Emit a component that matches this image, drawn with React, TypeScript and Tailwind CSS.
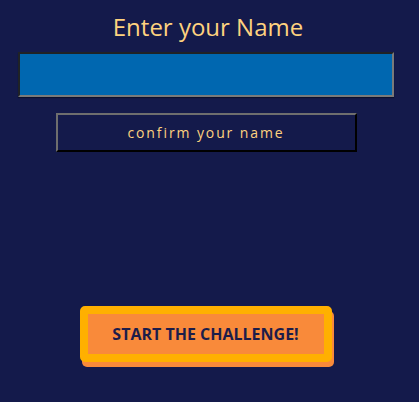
import { useState } from 'react';

export default function App() {
  const [name, setName] = useState('');

  return (
    <div className="min-h-[402px] w-full bg-[#141a4b] font-['Open_Sans',sans-serif] flex flex-col items-center pt-[11px]">
      <h1 className="text-[24px] leading-[32px] text-[#fed27f] ml-[-3px]">Enter your Name</h1>
      <input
        value={name}
        onChange={(e) => setName(e.target.value)}
        className="mt-[9px] ml-[-8px] w-[376px] h-[45px] bg-[#0067b0] border-2 border-t-[#1f2226] border-l-[#1f2226] border-r-[#7a7a7a] border-b-[#7a7a7a] outline-none text-white px-2 shadow-[0_1px_1px_rgba(0,0,0,0.4)]"
      />
      <button className="mt-[16px] ml-[-7px] w-[301px] h-[39px] border-2 border-t-[#6e6e6e] border-l-[#6e6e6e] border-r-black border-b-black bg-transparent text-[14px] tracking-[1.9px] text-[#fed27f]">
        confirm your name
      </button>
      <button className="mt-[154px] ml-[-8px] w-[252px] h-[56px] rounded-[5px] border-[8px] border-[#ffb000] bg-[#f98a3a] shadow-[2px_5px_0_#f98a3a] text-[16px] font-bold uppercase text-[#1c1d4a]">
        Start the challenge!
      </button>
    </div>
  );
}
